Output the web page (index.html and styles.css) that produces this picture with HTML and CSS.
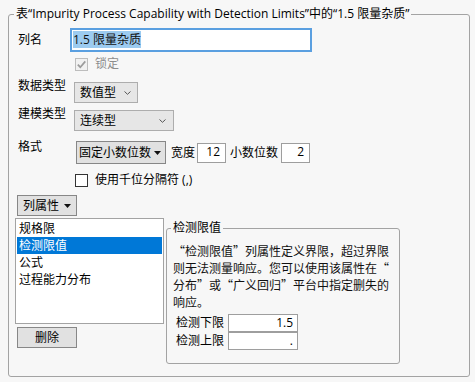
FILE: index.html
```html
<!DOCTYPE html>
<html lang="zh-CN">
<head>
<meta charset="utf-8">
<title>列信息</title>
<link rel="stylesheet" href="styles.css">
</head>
<body>
<fieldset class="panel">
  <legend class="panel-title">表“Impurity Process Capability with Detection Limits”中的“1.5 限量杂质”</legend>
  <div class="panel-body">
    <div class="row row-name">
      <span class="label label-name">列名</span>
      <div class="text-input focused"><span class="sel">1.5 限量杂质</span></div>
    </div>
    <div class="row row-check row-lock">
      <span class="check disabled"><svg width="11" height="11" viewBox="0 0 11 11"><path d="M1.8 5.6 L4.3 8.2 L9.3 2.4" fill="none" stroke="#9b9b9b" stroke-width="1.7"/></svg></span>
      <span class="muted">锁定</span>
    </div>
    <div class="row row-field row-data">
      <span class="label label-field">数据类型</span>
      <div class="combo combo-data"><span>数值型</span><svg class="chev" width="7" height="4" viewBox="0 0 7 4"><path d="M0.5 0.5 L3.5 3.3 L6.5 0.5" fill="none" stroke="#555" stroke-width="1"/></svg></div>
    </div>
    <div class="row row-field row-model">
      <span class="label label-field">建模类型</span>
      <div class="combo combo-model"><span>连续型</span><svg class="chev" width="7" height="4" viewBox="0 0 7 4"><path d="M0.5 0.5 L3.5 3.3 L6.5 0.5" fill="none" stroke="#555" stroke-width="1"/></svg></div>
    </div>
    <div class="row row-format">
      <span class="label label-format">格式</span>
      <div class="controls">
        <div class="menu-btn fmt"><span>固定小数位数</span><svg class="tri" width="7" height="4" viewBox="0 0 7 4"><path d="M0 0 H7 L3.5 4 Z" fill="#111"/></svg></div>
        <span class="inline-label gap-w">宽度</span>
        <div class="num-box small">12</div>
        <span class="inline-label gap-d">小数位数</span>
        <div class="num-box small">2</div>
      </div>
    </div>
    <div class="row row-check row-sep">
      <span class="check"></span>
      <span>使用千位分隔符 (,)</span>
    </div>
    <div class="menu-btn props"><span>列属性</span><svg class="tri" width="7" height="4" viewBox="0 0 7 4"><path d="M0 0 H7 L3.5 4 Z" fill="#111"/></svg></div>
    <div class="props-area">
      <div class="props-left">
        <ul class="list">
          <li>规格限</li>
          <li class="selected">检测限值</li>
          <li>公式</li>
          <li>过程能力分布</li>
        </ul>
        <div class="btn">删除</div>
      </div>
      <fieldset class="detail">
        <legend class="detail-title">检测限值</legend>
        <div class="detail-body">
          <p class="desc"><span class="qo">“</span>检测限值<span class="qc">”</span>列属性定义界限，超过界限<br>则无法测量响应。您可以使用该属性在<span class="qo">“</span><br>分布<span class="qc">”</span>或<span class="qo">“</span>广义回归<span class="qc">”</span>平台中指定删失的<br>响应。</p>
          <div class="limits">
            <div class="limit-row"><span class="limit-label">检测下限</span><div class="num-box wide">1.5</div></div>
            <div class="limit-row"><span class="limit-label">检测上限</span><div class="num-box wide">.</div></div>
          </div>
        </div>
      </fieldset>
    </div>
  </div>
</fieldset>
</body>
</html>
```
FILE: styles.css
```css
html, body {
  margin: 0;
  padding: 0;
  background: #f7f7f7;
}
body {
  font-family: "Open Sans", "Noto Sans CJK SC", sans-serif;
  font-size: 12px;
  line-height: 16px;
  color: #000;
}
.panel {
  margin: 6px 0 0 8px;
  padding: 0;
  width: 462px;
  height: 371px;
  box-sizing: border-box;
  border: 1px solid #a3a3a3;
  border-radius: 3px;
  min-inline-size: 0;
}
.panel-title {
  margin-left: 5px;
  padding: 0 2px;
  line-height: 16px;
  white-space: nowrap;
}
.panel-body {
  padding: 6px 9px 0 9px;
}
.row {
  display: flex;
}
.label {
  flex: none;
}
.row-name {
  align-items: center;
}
.label-name { width: 52px; }
.label-field { width: 56px; }
.label-format { width: 58px; }
.text-input {
  box-sizing: border-box;
  width: 242px;
  height: 24px;
  background: #fff;
  border: 2px solid #5a9fe0;
  padding: 2px 1px;
  line-height: 16px;
}
.sel {
  background: #9ccbf0;
  color: #111;
}
.row-check {
  align-items: center;
  padding-left: 57px;
  height: 16px;
}
.row-lock { margin-top: 4px; }
.row-sep { margin-top: 8px; }
.check {
  box-sizing: border-box;
  width: 13px;
  height: 13px;
  border: 1px solid #333;
  background: #fff;
  margin-right: 7px;
  display: flex;
  align-items: center;
  justify-content: center;
}
.check.disabled {
  border-color: #bdbdbd;
  background: #f1f1f1;
}
.muted { color: #8d8d8d; }
.row-data { margin-top: 6px; }
.row-model { margin-top: 3px; }
.combo {
  box-sizing: border-box;
  height: 21px;
  margin-top: 4px;
  background: #e6e6e6;
  border: 1px solid #adadad;
  display: flex;
  align-items: center;
  justify-content: space-between;
  padding: 0 6px 0 5px;
}
.combo-data { width: 64px; }
.combo-model { width: 100px; padding-right: 7px; }
.row-format { margin-top: 8px; }
.controls {
  display: flex;
  align-items: center;
  margin-top: 2px;
}
.menu-btn {
  box-sizing: border-box;
  background: #e1e1e1;
  border: 1px solid #878787;
  display: flex;
  align-items: center;
  justify-content: space-between;
}
.fmt {
  width: 90px;
  height: 23px;
  padding: 0 4px 0 2px;
}
.inline-label { flex: none; }
.gap-w { margin: 0 2px 0 5px; }
.gap-d { margin: 0 3px 0 4px; }
.num-box {
  box-sizing: border-box;
  background: #fff;
  border: 1px solid #9e9e9e;
  text-align: right;
  line-height: 15px;
}
.num-box.small {
  width: 29px;
  height: 20px;
  padding: 0 5px;
}
.props {
  margin: 7px 0 0 -1px;
  width: 60px;
  height: 21px;
  padding: 0 5px 0 5px;
}
.props-area {
  display: flex;
  align-items: flex-start;
  margin-top: 2px;
}
.props-left {
  margin-left: -3px;
  flex: none;
}
.list {
  list-style: none;
  margin: 0;
  box-sizing: border-box;
  width: 149px;
  height: 106px;
  padding: 1px;
  background: #fff;
  border: 1px solid #a3a3a3;
}
.list li {
  height: 17px;
  line-height: 17px;
  padding-left: 2px;
  white-space: nowrap;
}
.list li.selected {
  background: #0078d7;
  color: #fff;
}
.btn {
  box-sizing: border-box;
  margin: 3px 0 0 2px;
  width: 60px;
  height: 21px;
  background: #e1e1e1;
  border: 1px solid #878787;
  text-align: center;
  line-height: 19px;
}
.detail {
  margin: 2px 0 0 2px;
  padding: 0;
  width: 234px;
  height: 144px;
  box-sizing: border-box;
  border: 1px solid #a3a3a3;
  border-radius: 3px;
  min-inline-size: 0;
}
.detail-title {
  margin-left: 4px;
  padding: 0 2px;
  line-height: 16px;
}
.detail-body {
  padding: 6px 6px 0 6px;
}
.desc {
  margin: 0;
  font-family: "Noto Sans CJK SC", sans-serif;
  line-height: 17px;
  white-space: nowrap;
  color: #111;
}
.qo, .qc {
  display: inline-block;
  width: 1em;
}
.qo { text-align: right; }
.qc { text-align: left; }
.limits {
  margin-top: 4px;
}
.limit-row {
  display: flex;
  align-items: center;
}
.limit-label {
  margin-left: 3px;
  width: 52px;
}
.num-box.wide {
  width: 70px;
  height: 18px;
  padding: 0 4px;
  line-height: 16px;
}
```
